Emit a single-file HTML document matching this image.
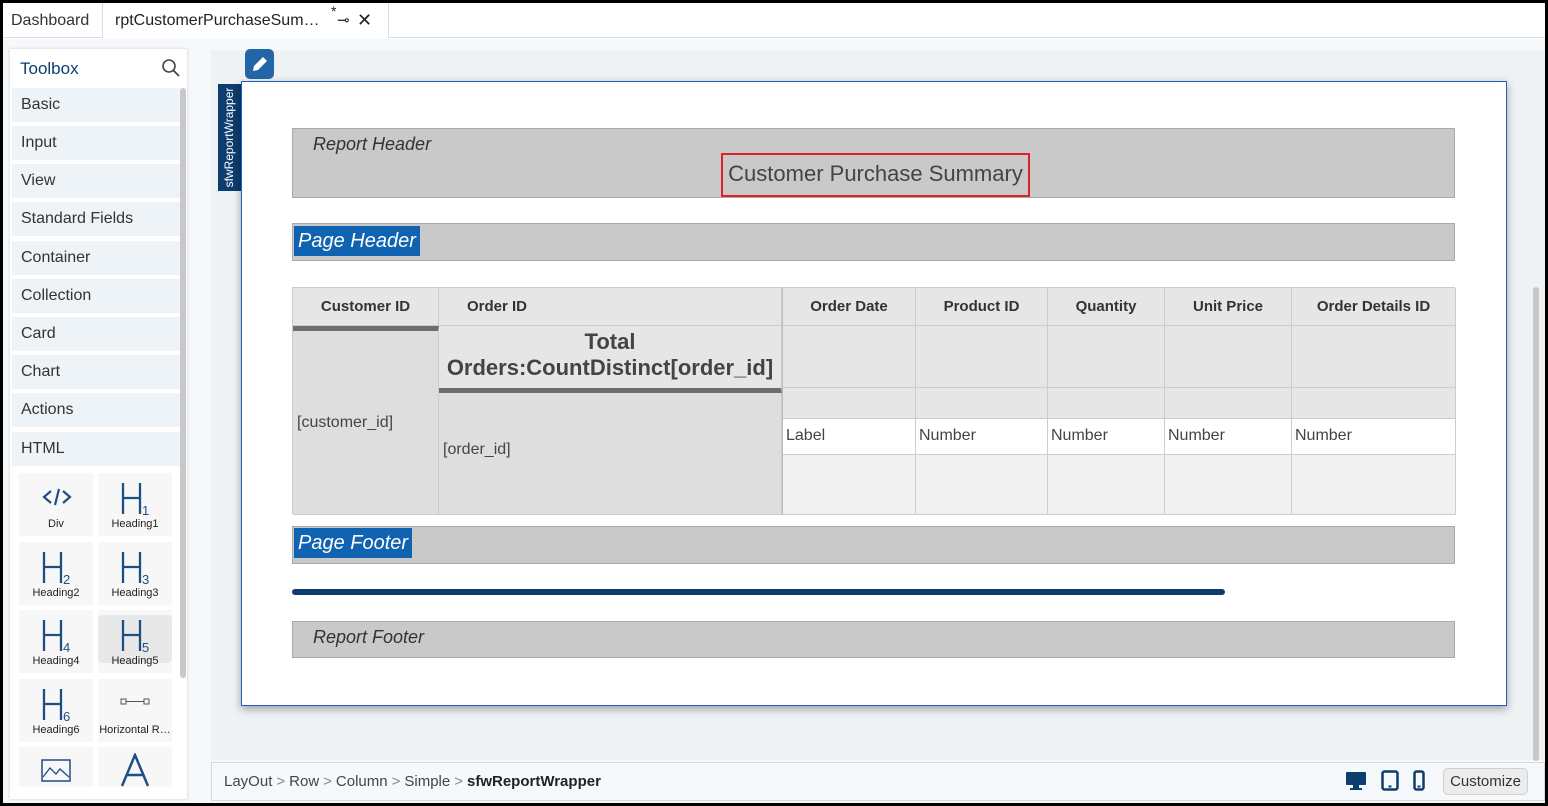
<!DOCTYPE html>
<html><head><meta charset="utf-8"><style>
*{box-sizing:border-box;margin:0;padding:0}
body{width:1548px;height:806px;overflow:hidden;background:#000;font-family:"Liberation Sans",sans-serif;position:relative}
.a{position:absolute}
#win{left:3px;top:3px;width:1542px;height:800px;background:#fff;overflow:hidden}
.tab{top:0;height:35px;font-size:16px;color:#333;line-height:35px;padding-left:8px}
.cat{left:9px;width:168px;height:34px;background:#edf3f7;font-size:16px;color:#333;line-height:34px;padding-left:9px}
.tile{width:74px;height:63px;background:#f7f7f7;font-size:11px;color:#222;text-align:center}
.tile .lab{position:absolute;bottom:6px;left:0;right:0;white-space:nowrap}
.tile svg.h{position:absolute;left:23px;top:9px}
.band{left:289px;width:1163px;background:#c9c9c9;border:1px solid #a9a9a9}
.bl{font-style:italic;font-size:18px;color:#333}
.blue{background:#0f63b0;color:#fff;font-style:italic;font-size:20px;padding:0 4px;line-height:30px}
.c{position:absolute;border-right:1px solid #ccc;border-bottom:1px solid #ccc}
.th{background:#e6e6e6;font-weight:bold;font-size:15px;color:#333;text-align:center;line-height:37px}
.tx{font-size:16px;color:#444}
.sep{color:#888;margin:0 4px}
</style></head><body>
<svg width="0" height="0" style="position:absolute"><defs><path id="hh" d="M2 1 V32 M19 1 V32 M2 16 H19" fill="none" stroke="#1e4f84" stroke-width="2.3"/></defs></svg>
<div id="win" class="a">
 <div class="a" style="left:0;top:0;width:1542px;height:35px;background:#fff;border-bottom:1px solid #ddd"></div>
 <div class="a tab" style="left:0;width:100px;border-right:1px solid #ddd">Dashboard</div>
 <div class="a tab" style="left:100px;width:286px;border-right:1px solid #ddd;background:#fff;padding-left:12px;color:#222">rptCustomerPurchaseSum… <span style="position:absolute;left:228px;top:-9px;font-size:14px">*</span><span style="position:absolute;left:234px;font-size:15px">⊸</span><span style="position:absolute;left:254px;font-size:18px">✕</span></div>
 <div class="a" style="left:0;top:36px;width:1542px;height:764px;background:#f6f9fc"></div>
 <div class="a" style="left:7px;top:46px;width:177px;height:750px;background:#fff;box-shadow:0 0 3px #ccc"></div>
 <div class="a" style="left:17px;top:56px;font-size:17px;color:#0d3f73">Toolbox</div>
 <svg class="a" style="left:158px;top:55px" width="20" height="20" viewBox="0 0 20 20"><circle cx="8" cy="8" r="6" fill="none" stroke="#444" stroke-width="1.6"/><line x1="12.5" y1="12.5" x2="18" y2="18" stroke="#444" stroke-width="1.8"/></svg>
 <div class="a" style="left:177px;top:85px;width:6px;height:590px;background:#c8c8c8;border-radius:3px"></div>
 <div class="a cat" style="top:85px">Basic</div>
 <div class="a cat" style="top:123px">Input</div>
 <div class="a cat" style="top:161px">View</div>
 <div class="a cat" style="top:199px">Standard Fields</div>
 <div class="a cat" style="top:238px">Container</div>
 <div class="a cat" style="top:276px">Collection</div>
 <div class="a cat" style="top:314px">Card</div>
 <div class="a cat" style="top:352px">Chart</div>
 <div class="a cat" style="top:390px">Actions</div>
 <div class="a cat" style="top:429px">HTML</div>
 <div class="a tile" style="left:16px;top:470px"><svg class="a" style="left:23px;top:14px" width="30" height="20"><path d="M9 4 L2 10 L9 16 M21 4 L28 10 L21 16 M17 2 L13 18" fill="none" stroke="#1e4f84" stroke-width="2.2"/></svg><div class="lab">Div</div></div>
 <div class="a tile" style="left:95px;top:470px"><svg class="h" width="32" height="36"><use href="#hh"/><text x="21" y="33" font-size="13" fill="#1e4f84" font-family="Liberation Sans">1</text></svg><div class="lab">Heading1</div></div>
 <div class="a tile" style="left:16px;top:539px"><svg class="h" width="32" height="36"><use href="#hh"/><text x="21" y="33" font-size="13" fill="#1e4f84" font-family="Liberation Sans">2</text></svg><div class="lab">Heading2</div></div>
 <div class="a tile" style="left:95px;top:539px"><svg class="h" width="32" height="36"><use href="#hh"/><text x="21" y="33" font-size="13" fill="#1e4f84" font-family="Liberation Sans">3</text></svg><div class="lab">Heading3</div></div>
 <div class="a tile" style="left:16px;top:607px"><svg class="h" width="32" height="36"><use href="#hh"/><text x="21" y="33" font-size="13" fill="#1e4f84" font-family="Liberation Sans">4</text></svg><div class="lab">Heading4</div></div>
 <div class="a tile" style="left:95px;top:607px"><div class="a" style="left:0;top:5px;width:74px;height:48px;background:#e8e8e8;border-radius:4px"></div><svg class="h" width="32" height="36"><use href="#hh"/><text x="21" y="33" font-size="13" fill="#1e4f84" font-family="Liberation Sans">5</text></svg><div class="lab">Heading5</div></div>
 <div class="a tile" style="left:16px;top:676px"><svg class="h" width="32" height="36"><use href="#hh"/><text x="21" y="33" font-size="13" fill="#1e4f84" font-family="Liberation Sans">6</text></svg><div class="lab">Heading6</div></div>
 <div class="a tile" style="left:95px;top:676px"><svg class="a" style="left:22px;top:18px" width="30" height="10"><rect x="1" y="2" width="5" height="5" fill="none" stroke="#555"/><rect x="24" y="2" width="5" height="5" fill="none" stroke="#555"/><line x1="6" y1="4.5" x2="24" y2="4.5" stroke="#555"/></svg><div class="lab">Horizontal R…</div></div>
 <div class="a tile" style="left:16px;top:744px;height:40px"><svg class="a" style="left:22px;top:12px" width="30" height="24"><rect x="1" y="1" width="28" height="21" fill="none" stroke="#1e4f84" stroke-width="1.5"/><polyline points="2,18 9,9 15,15 19,10 28,18" fill="none" stroke="#1e4f84" stroke-width="1.3"/></svg></div>
 <div class="a tile" style="left:95px;top:744px;height:40px"><svg class="a" style="left:22px;top:6px" width="30" height="34"><path d="M2 33 L15 2 L28 33 M7 22 H23" fill="none" stroke="#1e4f84" stroke-width="2.5"/></svg></div>
 <div class="a" style="left:208px;top:47px;width:1334px;height:710px;background:#eef2f5"></div>
 <div class="a" style="left:1530px;top:284px;width:6px;height:474px;background:#c8c8c8;border-radius:3px"></div>
 <div class="a" style="left:242px;top:46px;width:29px;height:30px;background:#2366a8;border-radius:5px"><svg width="29" height="30"><path d="M8 22 L9 17 L18 8 L22 12 L13 21 Z" fill="#fff"/></svg></div>
 <div class="a" style="left:215px;top:81px;width:23px;height:107px;background:#0d3d6e;color:#fff;font-size:12px;overflow:hidden"><div style="position:absolute;left:-42px;top:42px;width:107px;height:23px;transform:rotate(-90deg);text-align:center;line-height:23px">sfwReportWrapper</div></div>
 <div class="a" style="left:238px;top:78px;width:1266px;height:625px;background:#fff;border:1px solid #1f5fbf;box-shadow:0 3px 8px rgba(0,0,0,.35)"></div>
 <div class="a band" style="top:125px;height:70px"><div class="a bl" style="left:20px;top:5px">Report Header</div><div class="a" style="left:428px;top:24px;width:309px;height:44px;border:2px solid #e0202a;font-size:22px;color:#444;text-align:center;line-height:38px">Customer Purchase Summary</div></div>
 <div class="a band" style="top:220px;height:38px"><div class="a blue" style="left:1px;top:2px">Page Header</div></div>
 <div class="a" style="left:289px;top:284px;width:1163px;height:227px;background:#fff;border-left:1px solid #ccc;border-top:1px solid #ccc">
  <div class="c th" style="left:0;top:0;width:146px;height:38px">Customer ID</div>
  <div class="c th" style="left:146px;top:0;width:343px;height:38px;text-align:left;padding-left:28px">Order ID</div>
  <div class="c" style="left:0;top:38px;width:146px;height:189px;background:#dedede;border-top:5px solid #6e6e6e"><div class="a tx" style="left:4px;top:83px">[customer_id]</div></div>
  <div class="c" style="left:146px;top:38px;width:343px;height:67px;background:#e6e6e6;border-bottom:5px solid #6e6e6e;text-align:center;font-weight:bold;font-size:22px;color:#444;line-height:26px;padding-top:3px">Total<br>Orders:CountDistinct[order_id]</div>
  <div class="c" style="left:146px;top:105px;width:343px;height:122px;background:#dedede"><div class="a tx" style="left:4px;top:48px">[order_id]</div></div>
  <div class="a" style="left:489px;top:0;width:1px;height:227px;background:#bbb"></div>
  <div class="c th" style="left:490px;top:0;width:133px;height:38px">Order Date</div>
  <div class="c th" style="left:623px;top:0;width:132px;height:38px">Product ID</div>
  <div class="c th" style="left:755px;top:0;width:117px;height:38px">Quantity</div>
  <div class="c th" style="left:872px;top:0;width:127px;height:38px">Unit Price</div>
  <div class="c th" style="left:999px;top:0;width:164px;height:38px">Order Details ID</div>
  <div class="c" style="left:490px;top:38px;width:133px;height:62px;background:#e6e6e6"></div><div class="c" style="left:623px;top:38px;width:132px;height:62px;background:#e6e6e6"></div><div class="c" style="left:755px;top:38px;width:117px;height:62px;background:#e6e6e6"></div><div class="c" style="left:872px;top:38px;width:127px;height:62px;background:#e6e6e6"></div><div class="c" style="left:999px;top:38px;width:164px;height:62px;background:#e6e6e6"></div>
  <div class="c" style="left:490px;top:100px;width:133px;height:31px;background:#e6e6e6"></div><div class="c" style="left:623px;top:100px;width:132px;height:31px;background:#e6e6e6"></div><div class="c" style="left:755px;top:100px;width:117px;height:31px;background:#e6e6e6"></div><div class="c" style="left:872px;top:100px;width:127px;height:31px;background:#e6e6e6"></div><div class="c" style="left:999px;top:100px;width:164px;height:31px;background:#e6e6e6"></div>
  <div class="c tx" style="left:490px;top:131px;width:133px;height:36px;background:#fff;padding:8px 3px">Label</div><div class="c tx" style="left:623px;top:131px;width:132px;height:36px;background:#fff;padding:8px 3px">Number</div><div class="c tx" style="left:755px;top:131px;width:117px;height:36px;background:#fff;padding:8px 3px">Number</div><div class="c tx" style="left:872px;top:131px;width:127px;height:36px;background:#fff;padding:8px 3px">Number</div><div class="c tx" style="left:999px;top:131px;width:164px;height:36px;background:#fff;padding:8px 3px">Number</div>
  <div class="c" style="left:490px;top:167px;width:133px;height:60px;background:#f1f1f1"></div><div class="c" style="left:623px;top:167px;width:132px;height:60px;background:#f1f1f1"></div><div class="c" style="left:755px;top:167px;width:117px;height:60px;background:#f1f1f1"></div><div class="c" style="left:872px;top:167px;width:127px;height:60px;background:#f1f1f1"></div><div class="c" style="left:999px;top:167px;width:164px;height:60px;background:#f1f1f1"></div>
 </div>
 <div class="a band" style="top:523px;height:38px"><div class="a blue" style="left:1px;top:1px">Page Footer</div></div>
 <div class="a" style="left:289px;top:586px;width:933px;height:6px;background:#0d3d6e;border-radius:3px"></div>
 <div class="a band" style="top:618px;height:37px"><div class="a bl" style="left:20px;top:5px">Report Footer</div></div>
 <div class="a" style="left:208px;top:759px;width:1334px;height:39px;background:#f6f9fc;border:1px solid #d8d8d8"></div>
 <div class="a" style="left:221px;top:770px;font-size:15px;color:#444;white-space:nowrap">LayOut<span class="sep">&gt;</span>Row<span class="sep">&gt;</span>Column<span class="sep">&gt;</span>Simple<span class="sep">&gt;</span><b style="color:#222">sfwReportWrapper</b></div>
 <svg class="a" style="left:1342px;top:768px" width="22" height="20"><rect x="1" y="1" width="20" height="13" rx="1" fill="#0d3d6e"/><rect x="8" y="14" width="6" height="3" fill="#0d3d6e"/><rect x="5" y="17" width="12" height="2" fill="#0d3d6e"/></svg>
 <svg class="a" style="left:1378px;top:767px" width="18" height="21"><rect x="1.5" y="1.5" width="15" height="18" rx="2" fill="none" stroke="#0d3d6e" stroke-width="2.5"/><rect x="7.5" y="15.5" width="3" height="2" fill="#0d3d6e"/></svg>
 <svg class="a" style="left:1410px;top:767px" width="12" height="21"><rect x="1.5" y="1.5" width="9" height="18" rx="2" fill="none" stroke="#0d3d6e" stroke-width="2.5"/><rect x="4.5" y="15.5" width="3" height="2" fill="#0d3d6e"/></svg>
 <div class="a" style="left:1440px;top:765px;width:85px;height:27px;background:#ececec;border:1px solid #d0d0d0;border-radius:5px;font-size:15px;color:#333;text-align:center;line-height:25px">Customize</div>
</div>
</body></html>
